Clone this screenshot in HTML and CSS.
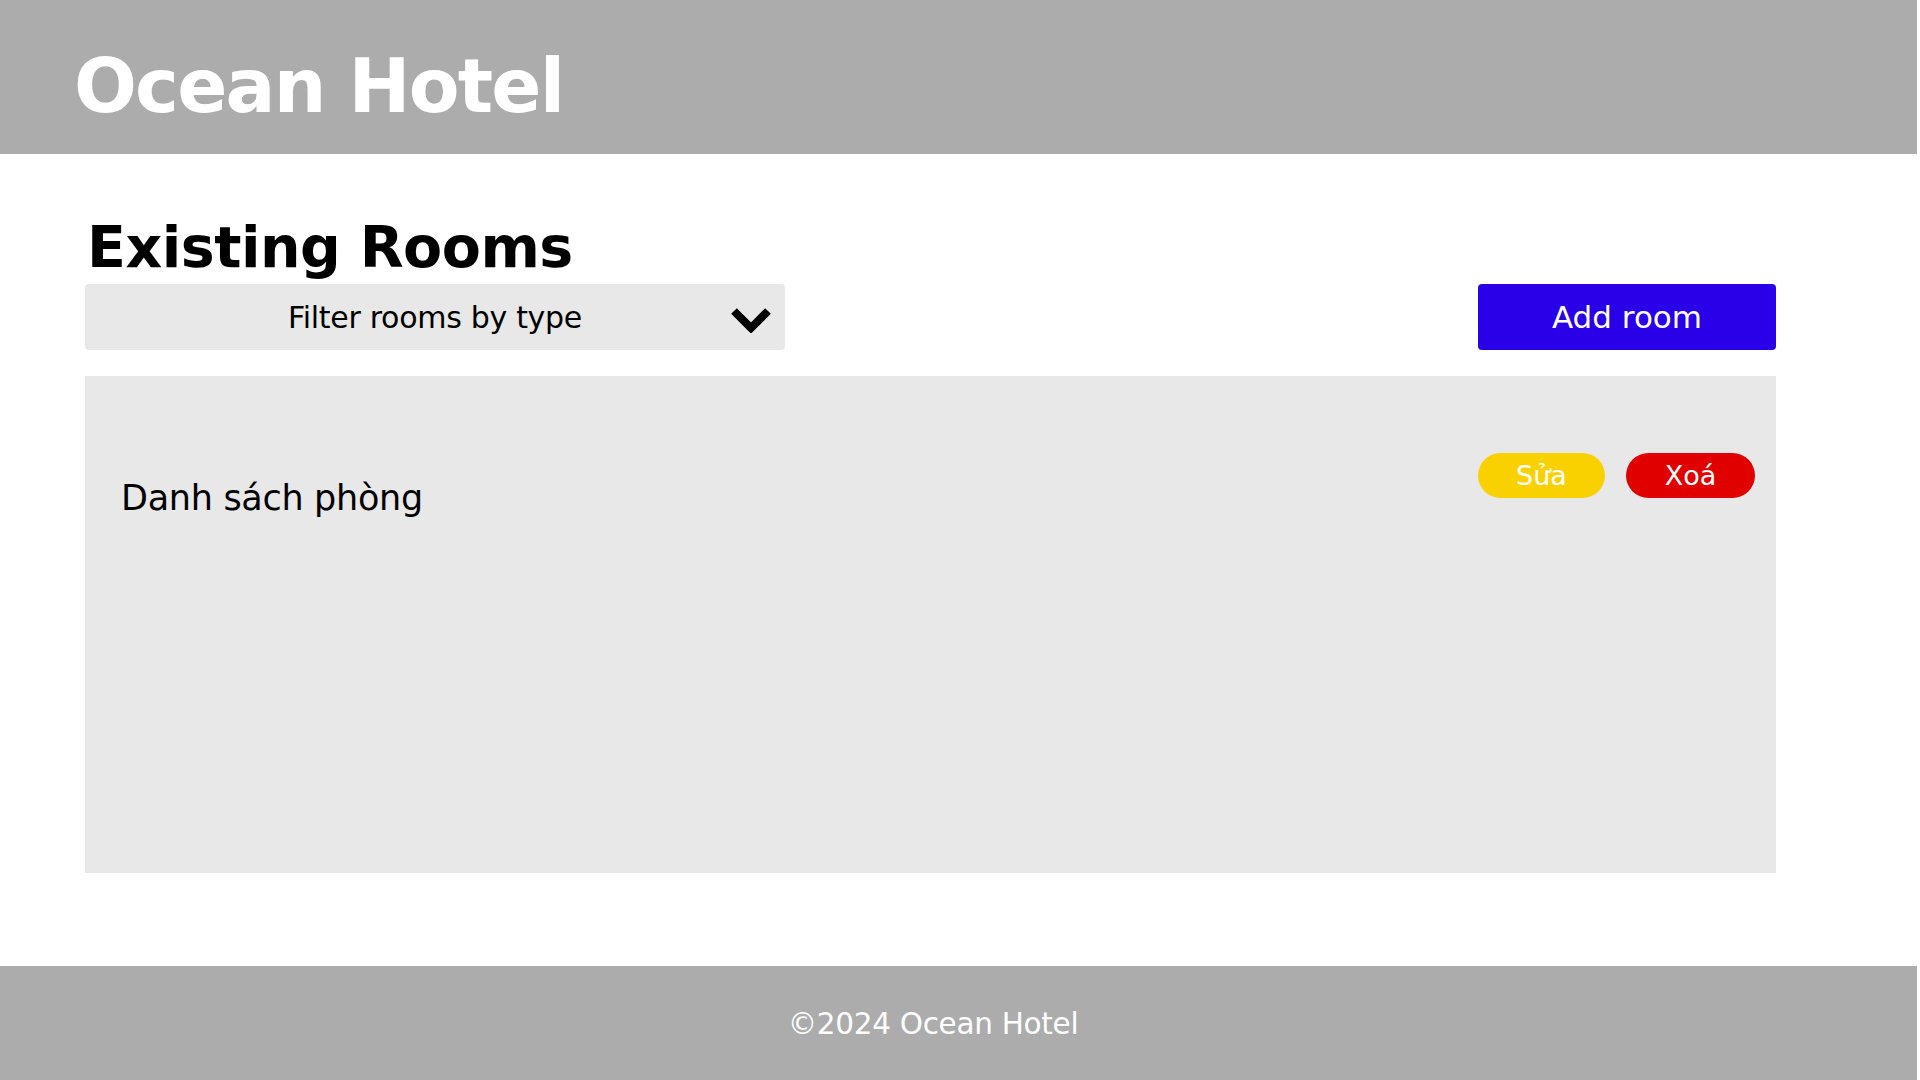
FILE: index.html
```html
<!DOCTYPE html>
<html lang="vi">
<head>
<meta charset="utf-8">
<title>Ocean Hotel</title>
<link rel="stylesheet" href="styles.css">
</head>
<body>
<div class="page">
  <header class="site-header">
    <h1 class="brand">Ocean Hotel</h1>
  </header>
  <main class="content">
    <h2 class="section-title">Existing Rooms</h2>
    <div class="toolbar">
      <div class="filter">
        <span class="filter-label">Filter rooms by type</span>
        <svg class="chevron" viewBox="0 0 40 26" width="40" height="26"><polyline points="3,4 20,21 37,4" fill="none" stroke="#000" stroke-width="8" stroke-linejoin="miter" stroke-miterlimit="10"/></svg>
      </div>
      <button class="btn-add">Add room</button>
    </div>
    <section class="room-panel">
      <div class="room-row">
        <p class="room-list-label">Danh sách phòng</p>
        <div class="room-actions">
          <button class="pill pill-edit">Sửa</button>
          <button class="pill pill-delete">Xoá</button>
        </div>
      </div>
    </section>
  </main>
  <footer class="site-footer">
    <p class="copyright">©2024 Ocean Hotel</p>
  </footer>
</div>
</body>
</html>
```

FILE: styles.css
```css
html, body {
  margin: 0;
  padding: 0;
  background: #ffffff;
}
body {
  font-family: "DejaVu Sans", "Noto Sans", sans-serif;
  color: #000;
}
.page {
  width: 1917px;
  height: 1080px;
  display: flex;
  flex-direction: column;
}
.site-header {
  height: 154px;
  background: #acacac;
  display: flex;
  align-items: center;
  padding-left: 74px;
  box-sizing: border-box;
}
.brand {
  margin: 0;
  color: #fff;
  font-size: 74px;
  font-weight: 700;
  letter-spacing: -1.8px;
  line-height: 1;
  padding-top: 18px;
}
.content {
  flex: 1;
  padding: 0 141px 0 85px;
}
.section-title {
  margin: 0 0 0 2px;
  font-size: 57px;
  font-weight: 600;
  line-height: 1.0;
  height: 122px;
  display: flex;
  align-items: flex-end;
  padding-bottom: 0;
  box-sizing: border-box;
  letter-spacing: -0.5px;
}
.toolbar {
  display: flex;
  justify-content: space-between;
  align-items: center;
  height: 66px;
  margin-top: 8px;
}
.filter {
  width: 700px;
  height: 66px;
  background: #e8e8e8;
  border-radius: 4px;
  display: flex;
  align-items: center;
  justify-content: center;
  position: relative;
}
.filter-label {
  font-size: 30px;
  letter-spacing: -0.3px;
}
.chevron {
  position: absolute;
  right: 14px;
  top: 23px;
}
.btn-add {
  width: 298px;
  height: 66px;
  border: none;
  border-radius: 4px;
  background: #2a00e8;
  color: #fff;
  font-family: inherit;
  font-size: 31px;
  padding: 0;
}
.room-panel {
  margin-top: 26px;
  height: 497px;
  background: #e8e8e8;
  padding: 77px 21px 0 36px;
  box-sizing: border-box;
}
.room-row {
  display: flex;
  justify-content: space-between;
  align-items: flex-start;
}
.room-list-label {
  margin: 25px 0 0 0;
  font-size: 35px;
  letter-spacing: -0.3px;
}
.room-actions {
  display: flex;
  gap: 21px;
}
.pill {
  height: 45px;
  width: 128px;
  border: none;
  border-radius: 23px;
  color: #fff;
  font-family: inherit;
  font-size: 27px;
  padding: 0;
}
.pill-edit {
  background: #f9d100;
  width: 127px;
}
.pill-delete {
  background: #e00000;
  width: 129px;
}
.site-footer {
  height: 114px;
  background: #acacac;
  display: flex;
  align-items: center;
  justify-content: center;
  padding-right: 51px;
}
.copyright {
  margin: 0;
  color: #fff;
  font-size: 29.5px;
  letter-spacing: -0.3px;
  padding-top: 2px;
}
```
